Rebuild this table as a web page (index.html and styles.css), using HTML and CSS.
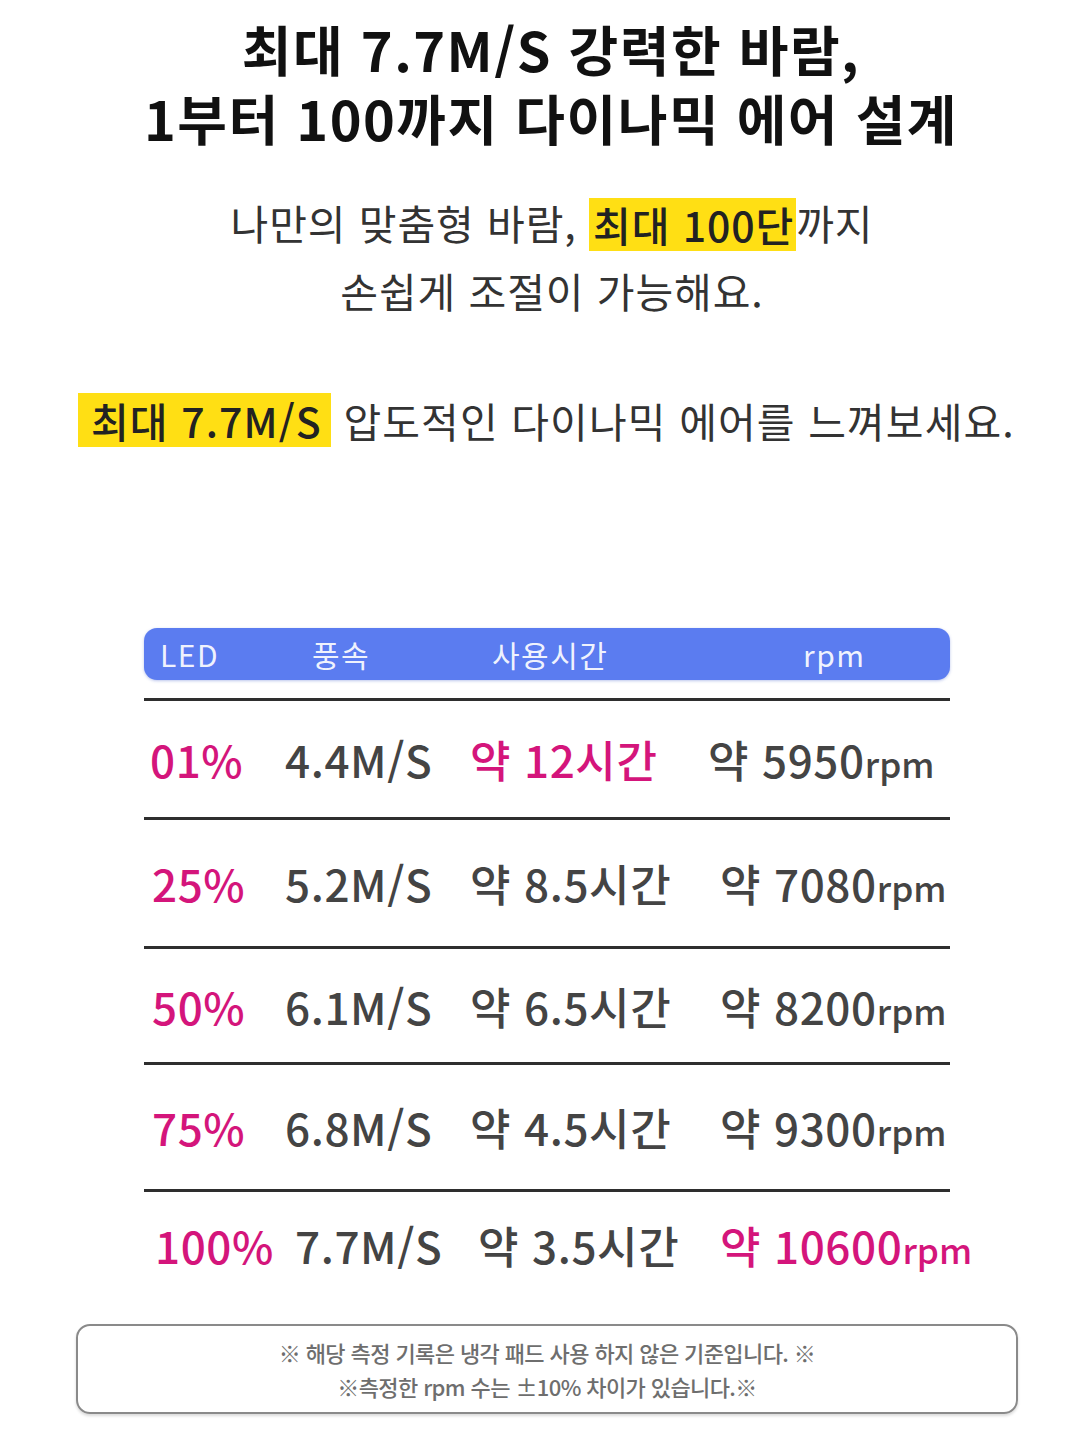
FILE: index.html
```html
<!DOCTYPE html>
<html lang="ko">
<head>
<meta charset="utf-8">
<title>최대 7.7M/S 강력한 바람</title>
<link rel="stylesheet" href="styles.css">
</head>
<body>
<main class="page">
  <h1 class="title"><span class="tline">최대 7.7M/S 강력한 바람,</span><span class="tline">1부터 100까지 다이나믹 에어 설계</span></h1>
  <p class="sub">나만의 맞춤형 바람, <mark class="hl hl-a">최대 100단</mark>까지<br>손쉽게 조절이 가능해요.</p>
  <p class="third"><mark class="hl hl-b">최대 7.7M/S</mark> 압도적인 다이나믹 에어를 느껴보세요.</p>

  <section class="spec">
    <div class="head">
      <span>LED</span><span>풍속</span><span>사용시간</span><span>rpm</span>
    </div>
    <div class="row r1">
      <span class="pink">01%</span><span>4.4M/S</span><span class="pink">약 12시간</span><span>약 5950<small>rpm</small></span>
    </div>
    <div class="row r2">
      <span class="pink">25%</span><span>5.2M/S</span><span>약 8.5시간</span><span>약 7080<small>rpm</small></span>
    </div>
    <div class="row r3">
      <span class="pink">50%</span><span>6.1M/S</span><span>약 6.5시간</span><span>약 8200<small>rpm</small></span>
    </div>
    <div class="row r4">
      <span class="pink">75%</span><span>6.8M/S</span><span>약 4.5시간</span><span>약 9300<small>rpm</small></span>
    </div>
    <div class="row r5">
      <span class="pink">100%</span><span>7.7M/S</span><span>약 3.5시간</span><span class="pink">약 10600<small>rpm</small></span>
    </div>
  </section>

  <div class="note">
    <p>※ 해당 측정 기록은 냉각 패드 사용 하지 않은 기준입니다. ※</p>
    <p>※측정한 rpm 수는 ±10% 차이가 있습니다.※</p>
  </div>
</main>
</body>
</html>
```

FILE: styles.css
```css
* { box-sizing: border-box; }
html, body { margin: 0; padding: 0; background: #ffffff; }
body {
  font-family: "Noto Sans CJK KR", "Noto Sans", sans-serif;
  color: #222;
  width: 1080px;
  height: 1435px;
  overflow: hidden;
}
.page { display: flex; flex-direction: column; padding-top: 14px; }

.title {
  margin: 0;
  padding-left: 22px;
  display: flex;
  flex-direction: column;
  align-items: center;
  font-size: 54px;
  font-weight: 700;
  color: #111;
  letter-spacing: 1.5px;
}
.tline { display: block; height: 69px; line-height: 69px; }

.sub {
  margin: 36px 0 0;
  padding-left: 24px;
  text-align: center;
  font-size: 41px;
  line-height: 68px;
  font-weight: 400;
  color: #333;
  letter-spacing: 0.9px;
}

.third {
  margin: 62px 0 0;
  padding-left: 78px;
  font-size: 41px;
  line-height: 68px;
  font-weight: 400;
  color: #333;
  letter-spacing: 1.1px;
}

.hl {
  display: inline-block;
  background: #ffdf14;
  color: #222;
  font-weight: 500;
  line-height: 53px;
  height: 53px;
  vertical-align: -2px;
  padding: 0 2px 0 4px;
}
.hl-b { padding-left: 13px; padding-right: 9px; height: 54px; line-height: 54px; vertical-align: 0; }

.spec {
  margin: 174px 0 0 144px;
  width: 806px;
  display: flex;
  flex-direction: column;
}

.head {
  height: 52px;
  border-radius: 13px;
  background: #5b7cf0;
  box-shadow: 0 1px 3px rgba(60, 90, 200, 0.35);
  display: grid;
  grid-template-columns: 152px 180px 311px auto;
  align-items: center;
  padding-left: 16px;
  font-size: 30px;
  color: rgba(255, 255, 255, 0.92);
  letter-spacing: 1.5px;
  margin-bottom: 18px;
}

.row {
  border-top: 3px solid #2e2e2e;
  display: grid;
  align-items: center;
  font-size: 44px;
  font-weight: 500;
  color: #444;
  letter-spacing: 0.6px;
  white-space: nowrap;
}
.row small { font-size: 0.8em; letter-spacing: 0; }
.pink { color: #d4157b; }

.r1 { height: 119px; padding-left: 6px; grid-template-columns: 135px 185px 238px auto; }
.r2 { height: 129px; padding-left: 8px; grid-template-columns: 133px 185px 250px auto; }
.r3 { height: 116px; padding-left: 8px; grid-template-columns: 133px 185px 250px auto; }
.r4 { height: 127px; padding-left: 8px; grid-template-columns: 133px 185px 250px auto; }
.r5 { height: 109px; padding-left: 11px; grid-template-columns: 140px 183px 242px auto; }

.note {
  margin: 26px 0 0 76px;
  width: 942px;
  height: 90px;
  border: 2px solid #8a8a8a;
  border-radius: 14px;
  box-shadow: 0 2px 3px rgba(0, 0, 0, 0.15);
  padding-top: 9px;
  text-align: center;
  font-size: 22px;
  line-height: 34px;
  font-weight: 500;
  color: #6e6e6e;
  letter-spacing: -0.6px;
}
.note p { margin: 0; }
```
